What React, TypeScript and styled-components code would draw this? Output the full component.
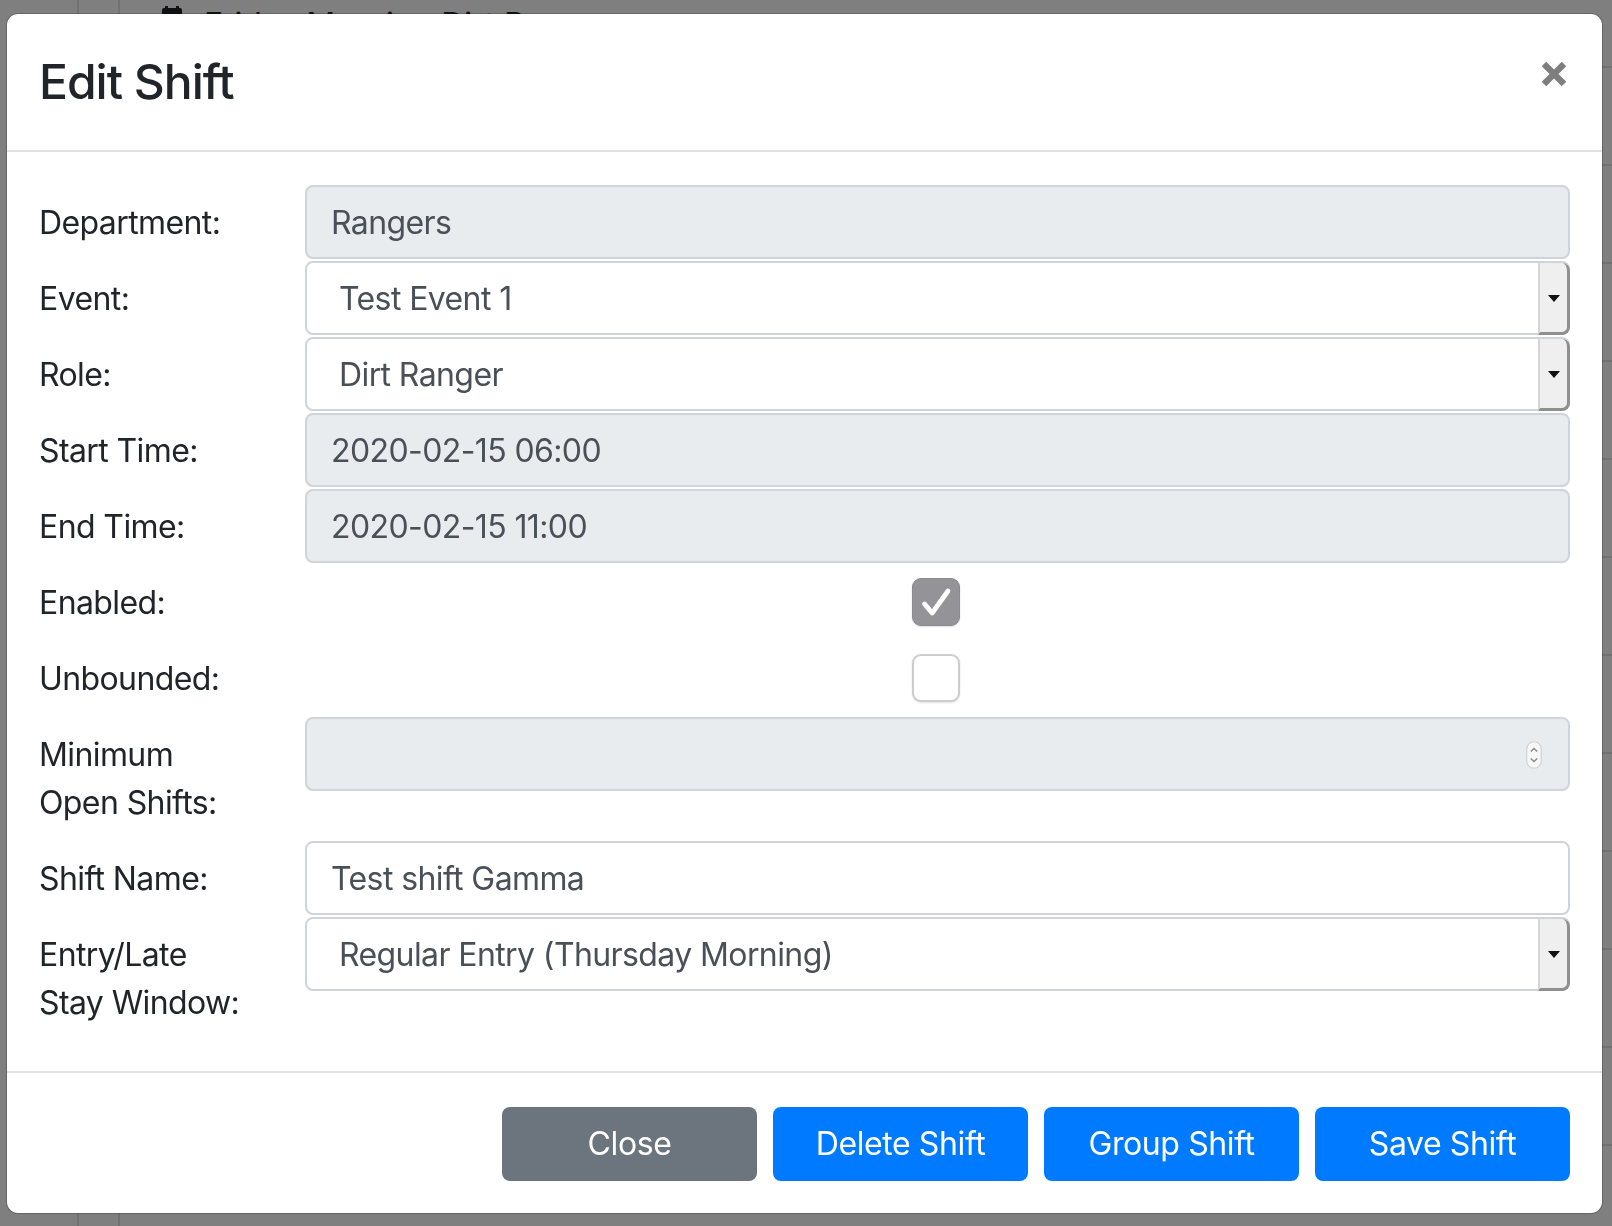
import React from "react";
import styled, { createGlobalStyle } from "styled-components";

const GlobalStyle = createGlobalStyle`
  html, body {
    margin: 0;
    padding: 0;
  }
  body {
    font-family: Inter, "Liberation Sans", sans-serif;
    overflow: hidden;
  }
  * {
    box-sizing: border-box;
  }
`;

/* page that sits behind the modal backdrop */
const Page = styled.div`
  width: 1612px;
  height: 1226px;
  background: #fff;
  display: grid;
  grid-template-columns: 79px 41px 1fr;
  overflow: hidden;
`;

const PageColumn = styled.div`
  border-right: 2px solid #dee2e6;
`;

const PageMain = styled.div`
  display: flex;
  flex-direction: column;
`;

const PageHeading = styled.div`
  height: 68px;
  display: flex;
  align-items: flex-start;
  gap: 22px;
  padding: 1px 0 0 42px;
  border-bottom: 2px solid #dee2e6;
  font-size: 32px;
  line-height: 48px;
  color: #212529;
  & > svg {
    margin-top: 5px;
  }
`;

const PageRow = styled.div`
  height: 98px;
  border-bottom: 2px solid #dee2e6;
`;

const Backdrop = styled.div`
  position: fixed;
  inset: 0;
  background: rgba(0, 0, 0, 0.5);
  padding: 13px 9px 12px 6px;
  display: flex;
`;

const Dialog = styled.div`
  flex: 1;
  display: flex;
  flex-direction: column;
  background: #fff;
  background-clip: padding-box;
  border: 1px solid rgba(0, 0, 0, 0.2);
  border-radius: 12px;
`;

const Header = styled.div`
  display: flex;
  justify-content: space-between;
  align-items: flex-start;
  padding: 32px;
  border-bottom: 2px solid #dee2e6;
`;

const Title = styled.h4`
  margin: 0;
  font-size: 48px;
  font-weight: 500;
  line-height: 72px;
  letter-spacing: -1px;
  color: #212529;
`;

const CloseX = styled.button`
  border: 0;
  padding: 0;
  margin: 15px 3px 0 0;
  background: transparent;
  opacity: 0.5;
  display: flex;
`;

const Body = styled.div`
  display: flex;
  flex-direction: column;
  gap: 2px;
  padding: 33px 32px 32px;
  letter-spacing: -0.6px;
`;

const Row = styled.div`
  display: grid;
  grid-template-columns: 266px 1fr;
  align-items: start;
`;

const Label = styled.div`
  font-size: 32px;
  line-height: 48px;
  padding: 14px 0 12px;
  color: #212529;
`;

const Field = styled.div<{ $disabled?: boolean; $select?: boolean }>`
  height: 74px;
  display: flex;
  align-items: center;
  border: 2px solid #ced4da;
  border-radius: 8px;
  background: ${({ $disabled }) => ($disabled ? "#e9ecef" : "#fff")};
  color: #495057;
  font-size: 32px;
  padding: 1px 26px 0 ${({ $select }) => ($select ? "32px" : "24px")};
  ${({ $select }) => ($select ? "padding-right: 0;" : "")}
`;

const FieldText = styled.span`
  flex: 1;
  white-space: nowrap;
`;

const SelectButton = styled.div`
  align-self: stretch;
  width: 32px;
  margin: -1px -2px -2px 0;
  display: flex;
  align-items: center;
  justify-content: center;
  background: #efefef;
  border-left: 2px solid #d6d6d6;
  border-right: 3px solid #8f8f8f;
  border-bottom: 3px solid #8f8f8f;
  border-radius: 0 8px 8px 0;
  &::after {
    content: "";
    border-left: 6px solid transparent;
    border-right: 6px solid transparent;
    border-top: 7px solid #111;
    margin-top: 1px;
  }
`;

const CheckCell = styled.div`
  height: 74px;
  display: flex;
  align-items: center;
  justify-content: center;
  padding-right: 4px;
`;

const Checkbox = styled.div<{ $checked?: boolean }>`
  width: 48px;
  height: 48px;
  border-radius: 9px;
  display: flex;
  align-items: center;
  justify-content: center;
  background: ${({ $checked }) => ($checked ? "#939398" : "#fff")};
  border: ${({ $checked }) => ($checked ? "1px solid #8a8a8e" : "2px solid #cdcdcd")};
  box-shadow: 0 1px 2px rgba(0, 0, 0, 0.12);
`;

const Footer = styled.div`
  display: flex;
  justify-content: flex-end;
  gap: 16px;
  padding: 34px 32px 32px;
  border-top: 2px solid #dee2e6;
`;

const Button = styled.button<{ $variant: "secondary" | "primary" }>`
  width: 255px;
  height: 74px;
  border: 0;
  border-radius: 8px;
  background: ${({ $variant }) => ($variant === "secondary" ? "#6c757d" : "#007bff")};
  color: #fff;
  font-family: inherit;
  font-size: 32px;
  line-height: 48px;
  letter-spacing: -0.4px;
`;

const CloseIcon = () => (
  <svg width="26" height="26" viewBox="0 0 26 26">
    <path d="M3 3 L23 23 M23 3 L3 23" stroke="#000" strokeWidth="6.4" />
  </svg>
);

const CheckIcon = () => (
  <svg width="48" height="48" viewBox="0 0 48 48">
    <path
      d="M12 26 L20 35.5 L36.5 12.5"
      fill="none"
      stroke="#fff"
      strokeWidth="5"
      strokeLinecap="round"
      strokeLinejoin="round"
    />
  </svg>
);

const Spinner = () => (
  <svg width="16" height="28" viewBox="0 0 16 28">
    <rect x="0.75" y="0.75" width="14.5" height="26.5" rx="7.25" fill="#f6f7f8" stroke="#cfd2d5" strokeWidth="1.2" />
    <path d="M4.8 10.5 L8 7.5 L11.2 10.5" fill="none" stroke="#888" strokeWidth="1.4" />
    <path d="M4.8 17.5 L8 20.5 L11.2 17.5" fill="none" stroke="#888" strokeWidth="1.4" />
  </svg>
);

const CalendarIcon = () => (
  <svg width="20" height="30" viewBox="0 0 20 30">
    <rect x="0" y="2" width="20" height="26" rx="2" fill="#212529" />
    <rect x="3" y="0" width="3" height="5" fill="#212529" />
    <rect x="14" y="0" width="3" height="5" fill="#212529" />
  </svg>
);

const Input = ({ value, disabled }: { value: string; disabled?: boolean }) => (
  <Field $disabled={disabled}>
    <FieldText>{value}</FieldText>
  </Field>
);

const Select = ({ value }: { value: string }) => (
  <Field $select>
    <FieldText>{value}</FieldText>
    <SelectButton />
  </Field>
);

const App = () => {
  return (
    <>
      <GlobalStyle />
      <Page>
        <PageColumn />
        <PageColumn />
        <PageMain>
          <PageHeading>
            <CalendarIcon />
            <span>Friday Morning Dirt Ranger</span>
          </PageHeading>
          {Array.from({ length: 12 }).map((_, i) => (
            <PageRow key={i} />
          ))}
        </PageMain>
      </Page>
      <Backdrop>
        <Dialog>
          <Header>
            <Title>Edit Shift</Title>
            <CloseX aria-label="Close">
              <CloseIcon />
            </CloseX>
          </Header>
          <Body>
            <Row>
              <Label>Department:</Label>
              <Input value="Rangers" disabled />
            </Row>
            <Row>
              <Label>Event:</Label>
              <Select value="Test Event 1" />
            </Row>
            <Row>
              <Label>Role:</Label>
              <Select value="Dirt Ranger" />
            </Row>
            <Row>
              <Label>Start Time:</Label>
              <Input value="2020-02-15 06:00" disabled />
            </Row>
            <Row>
              <Label>End Time:</Label>
              <Input value="2020-02-15 11:00" disabled />
            </Row>
            <Row>
              <Label>Enabled:</Label>
              <CheckCell>
                <Checkbox $checked>
                  <CheckIcon />
                </Checkbox>
              </CheckCell>
            </Row>
            <Row>
              <Label>Unbounded:</Label>
              <CheckCell>
                <Checkbox />
              </CheckCell>
            </Row>
            <Row>
              <Label>
                Minimum
                <br />
                Open Shifts:
              </Label>
              <Field $disabled>
                <FieldText />
                <Spinner />
              </Field>
            </Row>
            <Row>
              <Label>Shift Name:</Label>
              <Input value="Test shift Gamma" />
            </Row>
            <Row>
              <Label>
                Entry/Late
                <br />
                Stay Window:
              </Label>
              <Select value="Regular Entry (Thursday Morning)" />
            </Row>
          </Body>
          <Footer>
            <Button $variant="secondary">Close</Button>
            <Button $variant="primary">Delete Shift</Button>
            <Button $variant="primary">Group Shift</Button>
            <Button $variant="primary">Save Shift</Button>
          </Footer>
        </Dialog>
      </Backdrop>
    </>
  );
};

export default App;
